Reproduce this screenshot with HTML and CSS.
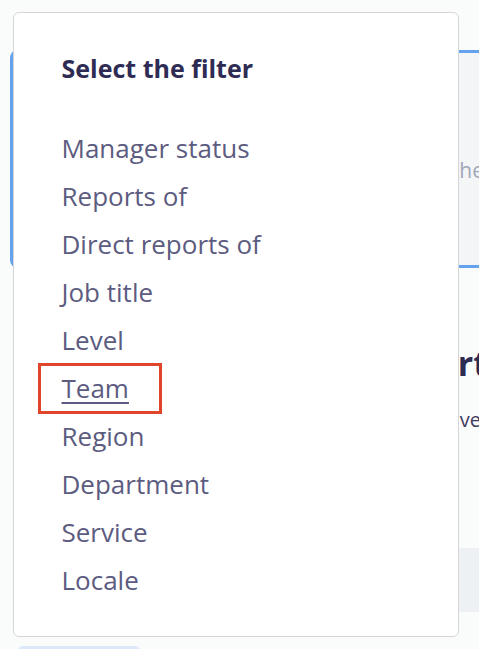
FILE: index.html
```html
<!DOCTYPE html>
<html lang="en">
<head>
    <meta charset="UTF-8">
    <meta name="viewport" content="width=device-width, initial-scale=1.0">
    <title>Filters</title>
    <link rel="stylesheet" href="styles.css">
</head>
<body>
    <div class="page">
        <div class="search-card">
            <p class="search-hint">Search by name or choose the</p>
        </div>
        <div class="section">
            <h2 class="section-title">Default report</h2>
            <p class="section-sub">Overview of all employees who are active</p>
            <div class="section-box"></div>
        </div>
        <div class="chip"></div>
    </div>

    <div class="filter-menu">
        <h3 class="filter-title">Select the filter</h3>
        <ul class="filter-list">
            <li><a href="#">Manager status</a></li>
            <li><a href="#">Reports of</a></li>
            <li><a href="#">Direct reports of</a></li>
            <li><a href="#">Job title</a></li>
            <li><a href="#">Level</a></li>
            <li class="selected"><a href="#">Team</a></li>
            <li><a href="#">Region</a></li>
            <li><a href="#">Department</a></li>
            <li><a href="#">Service</a></li>
            <li><a href="#">Locale</a></li>
        </ul>
    </div>
</body>
</html>
```

FILE: styles.css
```css
body {
    margin: 0;
    background-color: #fafbfb;
    font-family: "Open Sans", "Noto Sans", sans-serif;
    overflow: hidden;
}
.page {
    width: 479px;
    height: 649px;
    padding-top: 50px;
    padding-left: 10px;
    box-sizing: border-box;
}
.search-card {
    height: 218px;
    margin-right: -20px;
    background-color: #f3f5f7;
    border: 3px solid #64a2ee;
    border-right: none;
    border-radius: 8px 0 0 8px;
    box-sizing: border-box;
    padding: 103px 15px 0 0;
    text-align: right;
    white-space: nowrap;
}
.search-hint {
    margin: 0;
    font-size: 21px;
    line-height: 28px;
    color: #a0a8b8;
}
.section {
    padding-top: 75px;
    margin-right: -9px;
    text-align: right;
    white-space: nowrap;
}
.section-title {
    margin: 0;
    font-size: 34px;
    line-height: 40px;
    font-weight: 700;
    color: #2d2b52;
}
.section-sub {
    margin: 25px 7px 0 0;
    font-size: 20px;
    line-height: 24px;
    color: #3d3b5c;
}
.section-box {
    margin: 116px 0 0 20px;
    height: 64px;
    background-color: #eef1f4;
}
.chip {
    margin-top: 34px;
    margin-left: 8px;
    width: 122px;
    height: 10px;
    border-radius: 6px;
    background-color: #dde9fb;
}
.filter-menu {
    position: absolute;
    left: 13px;
    top: 12px;
    width: 446px;
    height: 625px;
    box-sizing: border-box;
    background-color: #ffffff;
    border: 1.5px solid #d6d6d8;
    border-radius: 6px;
    padding: 38.5px 0 0 47.5px;
}
.filter-title {
    margin: 0 0 40px;
    font-size: 25px;
    line-height: 32px;
    font-weight: 700;
    color: #2e2c54;
}
.filter-list {
    list-style: none;
    margin: 0;
    padding: 0;
}
.filter-list li {
    height: 48px;
    display: flex;
    align-items: center;
}
.filter-list a {
    font-size: 26px;
    color: #5c5b80;
    text-decoration: none;
}
.filter-list .selected {
    margin-left: -24px;
    width: 124px;
    padding-left: 21px;
    height: 51px;
    margin-top: -1px;
    margin-bottom: -2px;
    box-sizing: border-box;
    border: 3px solid #e0442b;
}
.filter-list .selected a {
    text-decoration: underline;
    text-underline-offset: 4px;
    text-decoration-thickness: 1.5px;
}
```
